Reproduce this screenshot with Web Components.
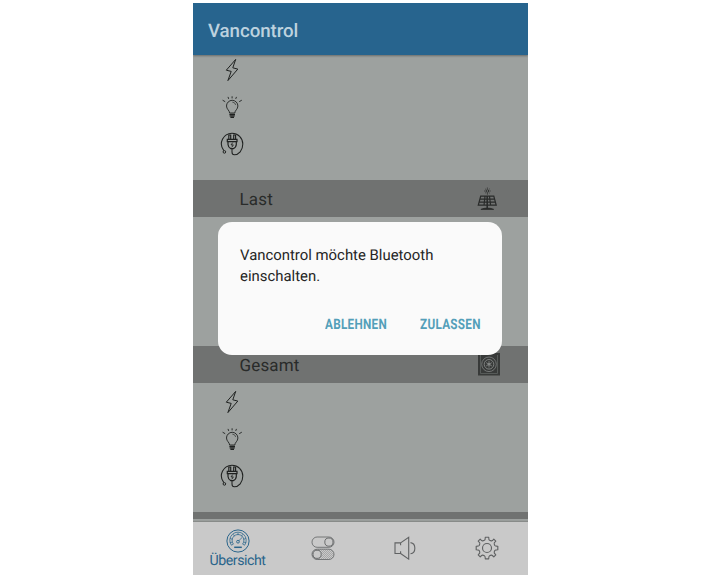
<!DOCTYPE html>
<html lang="de">
<head>
<meta charset="utf-8">
<title>Vancontrol</title>
<style>
body{margin:0;background:#fff;font-family:Roboto,"Liberation Sans",sans-serif;overflow:hidden;text-rendering:geometricPrecision}
</style>
</head>
<body>
<van-app></van-app>
<script>
const ICONS = {
  bolt: [24,24,`<path d="M15.7 1.4 6.3 12.2 11.2 13.4 7.9 22.6 17.8 11.1 12.8 9.8Z" stroke-width="1" stroke-linejoin="round"/>`],
  bulb: [24,24,`<path d="M9.6 18C9.6 15.4 6.5 14.3 6.5 11A5.7 5.7 0 0 1 17.9 11C17.9 14.3 14.8 15.4 14.8 18Z" stroke-width=".9"/><path d="M12.3 7.1Q15.3 7.3 15.7 10" stroke-width=".6"/><path d="M9.4 19.3H15M9.6 20.8H14.8M10.4 22.3H14" stroke-width="1.3"/><path d="M12.1 1.3V3.4M8 1.9 8.7 3.9M16.5 1.9 15.7 3.9M2.6 5.2 5.2 6.7M21.8 5.2 19.2 6.7" stroke-width=".9"/>`],
  plug: [24,24,`<path d="M3.8 18.6A10.7 10.7 0 0 1 12 1.2A10.8 10.8 0 0 1 22.8 12C22.8 18.5 18.7 22.7 14.3 22.7C12.6 22.7 12 21.5 12 20V17" stroke-width="1.05"/><circle cx="4.4" cy="19.9" r="1.3" stroke-width="1"/><path d="M8.8 7.3V3H10.7V7.3M13.7 7.3V3H15.6V7.3" stroke-width="1.15"/><path d="M7.3 7.4H17V9.6H7.3ZM8 9.8V12.5Q8.2 15.4 10.8 16.6H13.4Q16.1 15.4 16.3 12.5V9.8" stroke-width="1.2"/><path d="M12.8 10.5 11 12.9H13.3L11.8 15.3" stroke-width=".9"/>`],
  solar: [24,24,`<path d="M4.7 9.2H17.8L20.2 18.2H2.3ZM3.9 12.1H18.6M3.1 15.1H19.4M9 9.2 8 18.2M13.5 9.2 14.6 18.2" stroke-width="1.2"/><path d="M11.2 9V21.5" stroke-width="1.5"/><path d="M4.9 22.4Q8 21 11.2 21.1Q14.5 21 17.7 22.4Z" fill="currentColor" stroke-width=".8"/><circle cx="11.4" cy="4" r="1.3" stroke-width=".9"/><path d="M11.4.5V1.9M11.4 6V7.7M8.1 4H9.3M13.5 4H14.7M9.1 1.8 9.9 2.5M13.7 1.8 12.9 2.5M9.1 6.2 9.9 5.5M13.7 6.2 12.9 5.5" stroke-width=".7"/>`],
  battery: [22,24,`<path d="M0 0H22V22.5H0Z" fill="#383a39" stroke="none"/><path d="M2.5 2V20.5H19.5V2" stroke="#606362" stroke-width=".8"/><circle cx="11" cy="11.3" r="7.3" stroke="#787b7a" stroke-width=".9"/><circle cx="11" cy="11.3" r="4.8" stroke="#858887" stroke-width=".9"/><path d="M11 8V14.6M8.1 9.6 13.9 13M13.9 9.6 8.1 13" stroke="#858887" stroke-width=".8"/><circle cx="11" cy="11.3" r="1.3" fill="#858887" stroke="none"/>`],
  gauge: [24,24,`<circle cx="12" cy="12" r="11.1" stroke-width="1"/><path d="M5.4 16.2A8.2 8.2 0 1 1 18.6 16.2L16.6 15.1A5.9 5.9 0 1 0 7.4 15.1Z" stroke-width=".75"/><path d="M12 3.8V6.1M7.2 5.3 8.6 7.2M16.8 5.3 15.4 7.2M4.1 9.5 6.4 10.3M19.9 9.5 17.6 10.3M4 13.6 6.2 13.2M20 13.6 17.8 13.2M12.5 12 16.3 8.3" stroke-width=".75"/><circle cx="12" cy="12.7" r="1.4" stroke-width=".9"/><path d="M8.2 18.3H15.8" stroke-width="1.5"/>`],
  toggles: [24,24,`<defs><pattern id="dots" width="2" height="2" patternUnits="userSpaceOnUse"><path d="M0 0H1V1H0ZM1 1H2V2H1Z" fill="#a6a6a6" stroke="none"/></pattern></defs><rect x="1" y="1" width="22" height="10.3" rx="5.1" stroke-width=".8"/><circle cx="17.9" cy="6.1" r="4.1" stroke-width=".9"/><rect x="1" y="13.2" width="22" height="10.3" rx="5.1" fill="url(#dots)" stroke-width=".8"/><circle cx="6.1" cy="18.3" r="4.1" fill="#c9c9c9" stroke-width=".9"/>`],
  speaker: [24,24,`<path d="M7.6 9.2V6.9H2V17.5H7.6V15.2M7.6 6.9 15.7 1.3V23.1L7.6 17.5M17.5 6.6C23.3 7.4 23.3 17 17.5 17.8" stroke-width="1.1"/>`],
  gear: [24,24,`<path d="M10.3 1.2H13.7Q13.7 3.9 14.6 4.3L16.2 4.9Q17.3 5.2 18.8 3.2L20.8 5.2Q18.9 7 19.2 7.9L19.8 9.5Q20.2 10.3 22.8 10.3V13.7Q20.2 13.7 19.8 14.5L19.2 16.1Q18.9 17 20.8 18.8L18.8 20.8Q17.2 18.8 16.2 19.1L14.6 19.7Q13.7 20.1 13.7 22.8H10.3Q10.3 20.1 9.4 19.7L7.8 19.1Q6.8 18.8 5.2 20.8L3.2 18.8Q5.1 17 4.8 16.1L4.2 14.5Q3.8 13.7 1.2 13.7V10.3Q3.8 10.3 4.2 9.5L4.8 7.9Q5.1 7 3.2 5.2L5.2 3.2Q6.8 5.2 7.8 4.9L9.4 4.3Q10.3 3.9 10.3 1.2Z" stroke-linejoin="round" stroke-width="1.15"/><circle cx="12" cy="12" r="4.5" stroke-width="1.15"/>`]
};
function define(name, render) {
  customElements.define(name, class extends HTMLElement {
    connectedCallback() {
      if (!this.shadowRoot) this.attachShadow({mode:'open'}).innerHTML = render(this);
    }
  });
}
define('van-icon', el => {
  const [w,h,art] = ICONS[el.getAttribute('name')];
  return `<style>:host{display:block;width:${w}px;height:${h}px;flex:none}svg{display:block}</style>
  <svg width="${w}" height="${h}" viewBox="0 0 ${w} ${h}" fill="none" stroke="currentColor">${art}</svg>`;
});
define('van-header', () => `<style>
  :host{display:flex;align-items:center;flex:none;height:52px;box-sizing:border-box;padding:3px 0 0 15px;background:#27648e;color:#bdd2df;position:relative;z-index:1;box-shadow:0 1px 2px #0005;font-size:18.7px;font-weight:500;letter-spacing:-.06px}
  </style><slot></slot>`);
define('van-section', () => `<style>
  :host{display:flex;align-items:center;justify-content:space-between;height:37px;box-sizing:border-box;padding:3px 28px 0 46.5px;background:#707271;color:#292b2a;font-size:17px;letter-spacing:.15px}
  ::slotted(van-icon){margin-top:-2px}
  </style><slot></slot><slot name="icon"></slot>`);
define('van-readings', () => `<style>
  :host{display:grid;grid-template-rows:repeat(3,37.4px);align-items:center;height:129px;padding-left:27px;box-sizing:border-box;color:#1f2120}
  </style><van-icon name="bolt"></van-icon><van-icon name="bulb"></van-icon><van-icon name="plug"></van-icon>`);
define('van-tab', el => `<style>
  :host{display:flex;flex-direction:column;align-items:center;box-sizing:border-box;padding-top:${el.hasAttribute('active')?'7px':'14px'};color:${el.hasAttribute('active')?'#2a658b':'#606263'};font-size:14.2px;letter-spacing:-.47px;line-height:16px}
  span{white-space:nowrap}
  </style><van-icon name="${el.getAttribute('icon')}"></van-icon><span><slot></slot></span>`);
define('van-nav', () => `<style>
  :host{display:grid;grid-template-columns:89px 82px 82px 81px;flex:none;height:53px;background:#c9c9c9;box-shadow:0 -1px 1px #0002;position:relative}
  </style><slot></slot>`);
define('van-button', () => `<style>
  :host{display:block;height:18px;width:var(--w)}
  button{all:unset;display:block;white-space:nowrap;font-size:14.4px;line-height:18px;font-weight:700;letter-spacing:.35px;color:#539fb9;transform:scaleX(var(--squeeze));transform-origin:left}
  </style><button><slot></slot></button>`);
define('van-dialog', () => `<style>
  :host{position:absolute;left:25px;top:219px;width:284px;height:133px;box-sizing:border-box;padding:22.5px 21.5px 0 22px;background:#fafafa;border-radius:14px;color:#252525;z-index:2}
  p{margin:0;font-size:14.9px;line-height:21px;letter-spacing:0;white-space:nowrap}
  footer{display:flex;justify-content:flex-end;gap:33px;margin-top:29.5px}
  </style><p><slot></slot></p><footer><slot name="actions"></slot></footer>`);
define('van-app', () => `<style>
  :host{display:flex;flex-direction:column;position:relative;margin:3px 0 0 193px;width:335px;height:572px;overflow:hidden;background:#9da19f}
  main{flex:1;min-height:0;overflow:hidden}
  main>van-readings:first-child{margin-top:-4px}
  </style>
  <van-header>Vancontrol</van-header>
  <main>
    <van-readings></van-readings>
    <van-section>Last<van-icon slot="icon" name="solar"></van-icon></van-section>
    <van-readings></van-readings>
    <van-section>Gesamt<van-icon slot="icon" name="battery"></van-icon></van-section>
    <van-readings></van-readings>
    <van-section style="height:7px"></van-section>
  </main>
  <van-nav>
    <van-tab icon="gauge" active>Übersicht</van-tab><van-tab icon="toggles"></van-tab><van-tab icon="speaker"></van-tab><van-tab icon="gear"></van-tab>
  </van-nav>
  <van-dialog>Vancontrol möchte Bluetooth<br>einschalten.
    <van-button slot="actions" style="--w:62px;--squeeze:.815">ABLEHNEN</van-button>
    <van-button slot="actions" style="--w:61px;--squeeze:.815">ZULASSEN</van-button>
  </van-dialog>`);
</script>
</body>
</html>
